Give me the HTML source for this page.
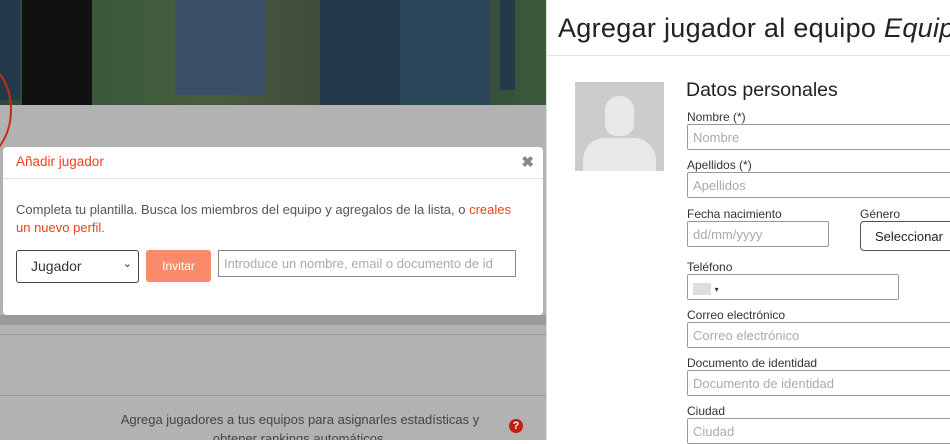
<!DOCTYPE html>
<html><head><meta charset="utf-8"><style>
*{box-sizing:border-box;margin:0;padding:0}
body{width:950px;height:440px;overflow:hidden;font-family:"Liberation Sans",sans-serif;background:#fff;position:relative}
.left{position:absolute;left:0;top:0;width:546px;height:440px;background:#b2b2b2;overflow:hidden}
.photo{position:absolute;left:0;top:0;width:546px;height:105px;background:linear-gradient(90deg,#2c4a3a,#3b5a3c 20%,#4a5c3e 40%,#3e4a3a 60%,#2f4540 80%,#3d5a3a)}
.p{position:absolute;background:#24394a}
.modal{position:absolute;left:3px;top:147px;width:540px;height:168px;background:#fff;border-radius:4px}
.mh{height:32px;border-bottom:1px solid #e2e2e2;padding:7px 13px;color:#f0401e;font-size:13.5px}
.x{position:absolute;right:9px;top:6px;color:#888;font-weight:bold;font-size:15px}
.mb{padding:22px 13px 0;font-size:13px;color:#555;line-height:18px}
.or{color:#f0401e}
.row{position:absolute;top:103px;left:13px}
.sel{position:absolute;left:0;top:0;width:123px;height:33px;border:1px solid #444;border-radius:3px;font-size:14px;padding:7px 14px;color:#333}
.btn{position:absolute;left:130px;top:0;width:65px;height:32px;background:#f98a6b;border-radius:3px;color:#fff;font-size:12px;text-align:center;line-height:32px}
.inp{position:absolute;left:202px;top:0;width:298px;height:27px;border:1px solid #888;font-size:13px;color:#aaa;padding:5px 5px;white-space:nowrap;overflow:hidden}
.right{position:absolute;left:546px;top:0;width:404px;height:440px;background:#fff;border-left:1px solid #ddd}
h1{position:absolute;left:11px;top:13px;font-weight:normal;font-size:27px;color:#222;white-space:nowrap;letter-spacing:0.3px}
.hr{position:absolute;left:0;top:55px;width:404px;border-top:1px solid #e0e0e0}
.lab{position:absolute;left:140px;font-size:12px;color:#333}
.f{position:absolute;left:140px;width:280px;height:26px;border:1px solid #999;border-radius:2px;font-size:13px;color:#aaa;padding:5px 5px}
</style></head><body>
<div class="left">
<div class="photo">
<div class="p" style="left:0;top:0;width:20px;height:100px"></div>
<div class="p" style="left:22px;top:0;width:70px;height:105px;background:#111"></div>
<div class="p" style="left:175px;top:0;width:90px;height:95px;background:#3a5068"></div>
<div class="p" style="left:320px;top:0;width:80px;height:105px"></div>
<div class="p" style="left:400px;top:0;width:90px;height:105px;background:#2a4558"></div>
<div class="p" style="left:500px;top:0;width:15px;height:90px"></div>
</div>
<div style="position:absolute;left:-60px;top:60px;width:72px;height:100px;border:2px solid #c0300f;border-radius:50%"></div>
<div style="position:absolute;left:0;top:334px;width:546px;border-top:1px solid #999"></div>
<div style="position:absolute;left:0;top:395px;width:546px;border-top:1px solid #999"></div>
<div style="position:absolute;left:0;top:315px;width:546px;height:10px;background:#9a9a9a"></div>
<div style="position:absolute;left:100px;top:410px;width:400px;text-align:center;font-size:13px;color:#444;line-height:19px">Agrega jugadores a tus equipos para asignarles estadísticas y obtener rankings automáticos.</div>
<div style="position:absolute;left:509px;top:419px;width:14px;height:14px;border-radius:50%;background:#c0200a;color:#fff;font-size:11px;font-weight:bold;text-align:center;line-height:14px">?</div>
<div class="modal">
<div class="mh">Añadir jugador</div><div class="x">✖</div>
<div class="mb">Completa tu plantilla. Busca los miembros del equipo y agregalos de la lista, o <span class="or">creales<br>un nuevo perfil.</span></div>
<div class="row"><div class="sel">Jugador<span style="position:absolute;right:6px;top:6px;font-size:11px">⌄</span></div><div class="btn">Invitar</div><div class="inp">Introduce un nombre, email o documento de id</div></div>
</div>
</div>
<div class="right">
<h1>Agregar jugador al equipo <i>Equipo</i></h1>
<div class="hr"></div>
<div style="position:absolute;left:28px;top:82px;width:89px;height:89px;background:#ccc;overflow:hidden">
<div style="position:absolute;left:30px;top:14px;width:29px;height:40px;background:#e8e8e8;border-radius:14px 14px 12px 12px"></div>
<div style="position:absolute;left:8px;top:56px;width:73px;height:40px;background:#e8e8e8;border-radius:22px 22px 0 0"></div>
</div>
<div style="position:absolute;left:139px;top:79px;font-size:19.5px;color:#222">Datos personales</div>
<div class="lab" style="top:110px">Nombre (*)</div><div class="f" style="top:124px">Nombre</div>
<div class="lab" style="top:158px">Apellidos (*)</div><div class="f" style="top:172px">Apellidos</div>
<div class="lab" style="top:207px">Fecha nacimiento</div><div class="f" style="top:221px;width:142px">dd/mm/yyyy</div>
<div class="lab" style="left:313px;top:207px">Género</div><div class="f" style="left:313px;top:221px;width:120px;height:30px;border-color:#555;color:#222;padding:7px 14px;border-radius:4px">Seleccionar</div>
<div class="lab" style="top:260px">Teléfono</div><div class="f" style="top:274px;width:212px"><span style="display:inline-block;width:18px;height:12px;background:#ddd;vertical-align:middle"></span> <span style="font-size:8px;color:#333">▾</span></div>
<div class="lab" style="top:308px">Correo electrónico</div><div class="f" style="top:322px">Correo electrónico</div>
<div class="lab" style="top:356px">Documento de identidad</div><div class="f" style="top:370px">Documento de identidad</div>
<div class="lab" style="top:404px">Ciudad</div><div class="f" style="top:418px">Ciudad</div>
</div>
</body></html>
